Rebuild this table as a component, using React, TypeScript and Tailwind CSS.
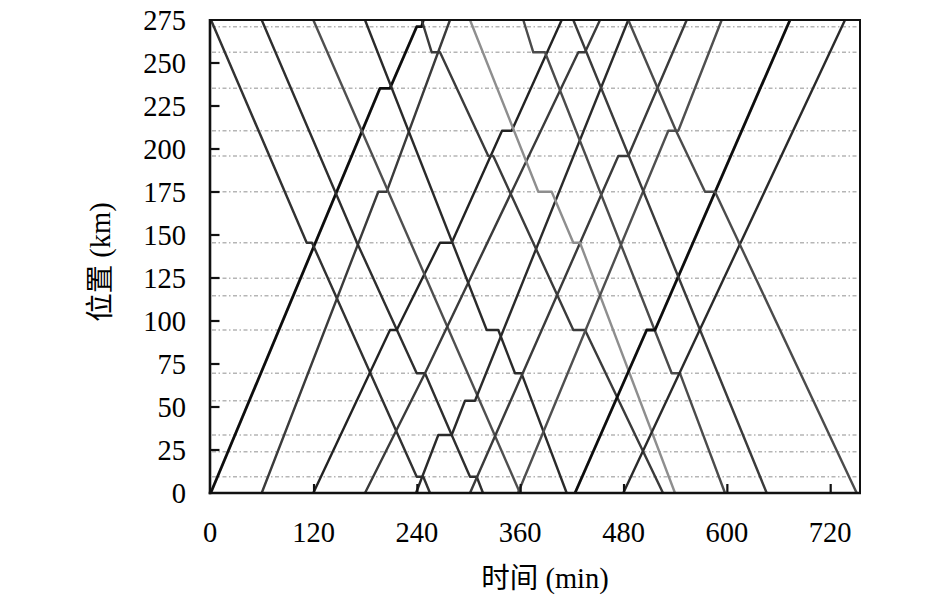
import React from "react";

type Pt = [number, number];
type Train = { pts: Pt[]; color: string; w?: number };

const trains: Train[] = [
  { color: "#0a0a0a", w: 2.8, pts: [[210.7, 493], [380, 88.3], [390, 88.3], [416.7, 26.7], [421.7, 26.7], [423.3, 20]] },
  { color: "#303030", pts: [[211, 20], [306.7, 242.7], [312, 242.7], [416.7, 476.7], [423.3, 476.7], [430, 493]] },
  { color: "#3a3a3a", pts: [[261.7, 493], [378.3, 191.7], [386.7, 191.7], [450, 20]] },
  { color: "#2e2e2e", pts: [[261.7, 20], [357, 242.7], [416.7, 373.3], [425, 373.3], [451.7, 435], [470, 476.7], [476.7, 476.7], [483, 493]] },
  { color: "#222", pts: [[313.3, 493], [390, 330], [396.7, 330], [440, 242.7], [451.7, 242.7], [502, 130.7], [511.7, 130.7], [561.7, 20]] },
  { color: "#505050", pts: [[313.3, 20], [520, 493]] },
  { color: "#3a3a3a", pts: [[365, 493], [425, 373.3], [578.3, 52.3], [585, 52.3], [600, 20]] },
  { color: "#2c2c2c", pts: [[365, 20], [486.7, 330], [498.3, 330], [515, 373.3], [521.5, 373.3], [566.7, 493]] },
  { color: "#2c2c2c", pts: [[416, 493], [438.3, 435], [451.7, 435], [465, 400.7], [475, 400.7], [628.3, 20]] },
  { color: "#3a3a3a", pts: [[421.7, 20], [431.7, 52.3], [440, 52.3], [488.3, 156], [493.3, 156], [573.3, 330], [585, 330], [663, 493]] },
  { color: "#3a3a3a", pts: [[470, 493], [618.3, 156], [628.3, 156], [686.7, 20]] },
  { color: "#8e8e8e", pts: [[470, 20], [538.3, 191.7], [551.7, 191.7], [573.3, 242.7], [580, 242.7], [675, 493]] },
  { color: "#505050", pts: [[518, 493], [668.3, 130.7], [678.3, 130.7], [721.7, 20]] },
  { color: "#4c4c4c", pts: [[523.3, 20], [533.3, 52.3], [545, 52.3], [671.7, 373.3], [680, 373.3], [725, 493]] },
  { color: "#0a0a0a", w: 2.8, pts: [[575, 493], [646.7, 330], [655, 330], [790, 20]] },
  { color: "#3a3a3a", pts: [[573.3, 20], [766.7, 493]] },
  { color: "#2c2c2c", pts: [[623.3, 493], [845, 20]] },
  { color: "#4c4c4c", pts: [[628.3, 20], [676, 130.7], [705, 191.7], [715, 191.7], [856.7, 493]] },
];

const stations = [26.7, 52.3, 88.3, 130.7, 156, 191.7, 242.7, 278.3, 295.7, 330, 373.3, 400.7, 435, 451.7, 476.7];

const X0 = 210.7;
const Y0 = 493;
const xOf = (t: number) => X0 + t * 0.8611;
const yOf = (km: number) => Y0 - km * 1.72;

const FONT = "'Liberation Serif', 'Noto Sans CJK SC', serif";

export default function App() {
  const yTicks = [0, 25, 50, 75, 100, 125, 150, 175, 200, 225, 250, 275];
  const xTicks = [0, 120, 240, 360, 480, 600, 720];
  return (
    <div className="w-[945px] h-[604px] bg-white flex">
      <svg width={945} height={604} viewBox="0 0 945 604" className="block">
        <defs>
          <clipPath id="plot">
            <rect x={210} y={20} width={650} height={473} />
          </clipPath>
          <filter id="soft" x="-5%" y="-5%" width="110%" height="110%">
            <feGaussianBlur stdDeviation="0.35" />
          </filter>
        </defs>
        {stations.map((y) => (
          <line
            key={y}
            x1={212}
            x2={859}
            y1={y}
            y2={y}
            stroke="#b5b5b5"
            strokeWidth={1.4}
            strokeDasharray="4 2.5 1.5 2.5"
          />
        ))}
        <g clipPath="url(#plot)">
          <g fill="none" strokeLinejoin="round" strokeLinecap="round" filter="url(#soft)">
            {trains.map((tr, i) => (
              <polyline
                key={i}
                points={tr.pts.map((p) => p.join(",")).join(" ")}
                stroke={tr.color}
                strokeWidth={tr.w ?? 2.4}
              />
            ))}
          </g>
        </g>
        <line x1={210} y1={20} x2={860} y2={20} stroke="#111" strokeWidth={2} />
        <line x1={860} y1={19} x2={860} y2={494} stroke="#111" strokeWidth={2} />
        <line x1={210} y1={19} x2={210} y2={494.3} stroke="#111" strokeWidth={2.6} />
        <line x1={208.7} y1={493} x2={861} y2={493} stroke="#111" strokeWidth={2.6} />
        {yTicks.slice(1, -1).map((k) => (
          <line key={k} x1={210} x2={219.5} y1={yOf(k)} y2={yOf(k)} stroke="#111" strokeWidth={2.2} />
        ))}
        {xTicks.slice(1).map((t) => (
          <line key={t} x1={xOf(t)} x2={xOf(t)} y1={493} y2={484} stroke="#111" strokeWidth={2.2} />
        ))}
        {yTicks.map((k) => (
          <text
            key={k}
            x={186}
            y={yOf(k) + 9.6}
            textAnchor="end"
            fontFamily={FONT}
            fontSize={28.5}
            fill="#000"
          >
            {k}
          </text>
        ))}
        {xTicks.map((t) => (
          <text
            key={t}
            x={xOf(t) - 0.5}
            y={541.5}
            textAnchor="middle"
            fontFamily={FONT}
            fontSize={28.5}
            fill="#000"
          >
            {t}
          </text>
        ))}
        <text x={545} y={588} textAnchor="middle" fontFamily={FONT} fontSize={28.5} fill="#000">
          时间 (min)
        </text>
        <text
          transform="translate(110,262) rotate(-90)"
          textAnchor="middle"
          fontFamily={FONT}
          fontSize={28.5}
          fill="#000"
        >
          位置 (km)
        </text>
      </svg>
    </div>
  );
}
